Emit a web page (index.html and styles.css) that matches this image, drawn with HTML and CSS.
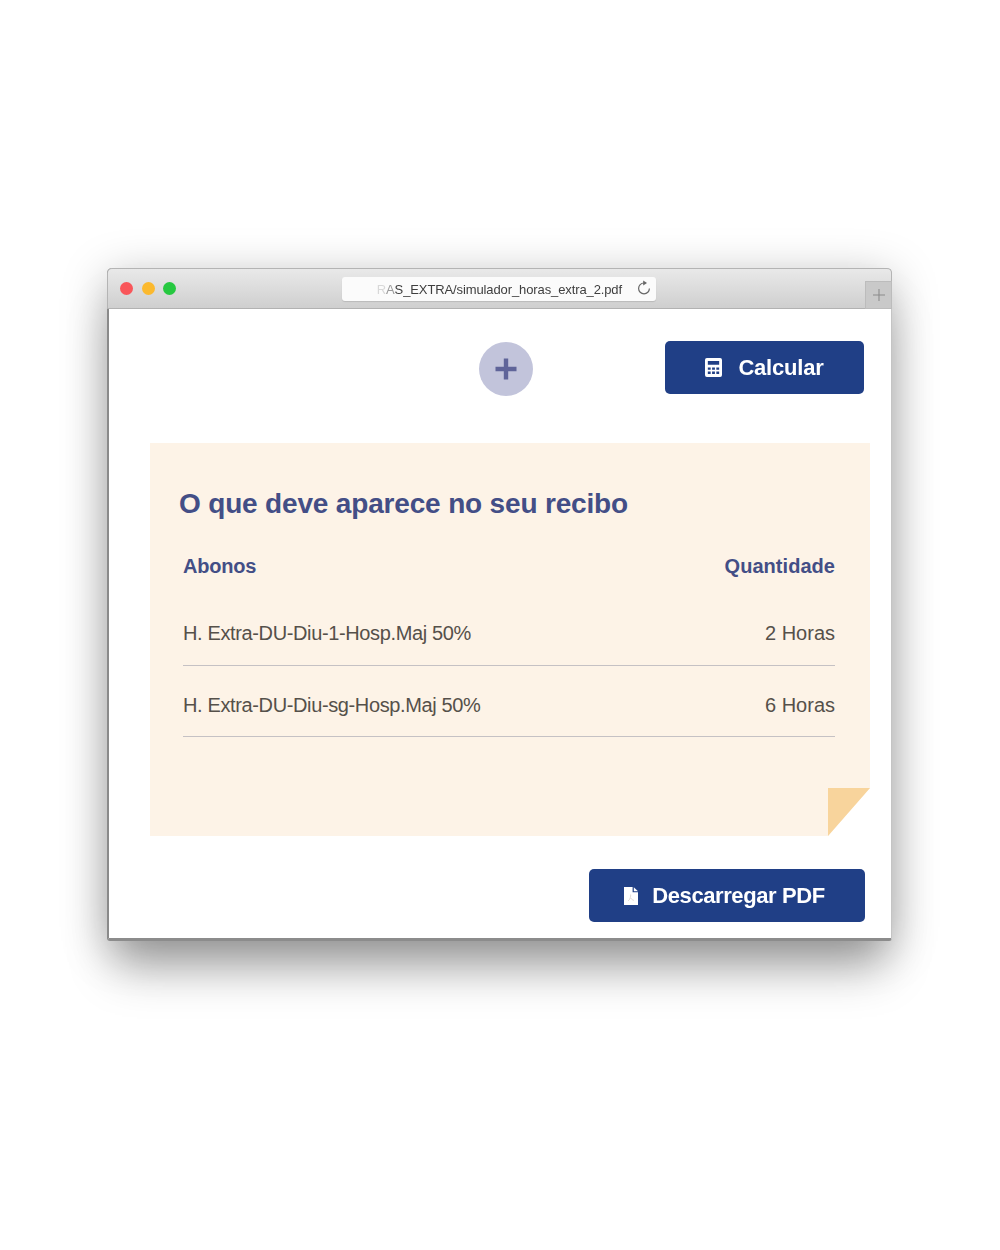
FILE: index.html
```html
<!DOCTYPE html>
<html lang="pt">
<head>
<meta charset="utf-8">
<title>Simulador de horas extra</title>
<link rel="stylesheet" href="styles.css">
</head>
<body>
<main class="window">
  <header class="titlebar">
    <div class="lights">
      <span class="light red"></span>
      <span class="light yellow"></span>
      <span class="light green"></span>
    </div>
    <div class="address">
      <span class="url"><span class="fade1">R</span><span class="fade2">A</span>S_EXTRA/simulador_horas_extra_2.pdf</span>
      <svg class="reload" viewBox="0 0 16 16" width="16" height="16" aria-hidden="true">
        <path d="M8 3a5.4 5.4 0 1 0 5.4 5.4" fill="none" stroke="#666" stroke-width="1.2"/>
        <path d="M7.2 0.6 L11 3 L7.2 5.4 Z" fill="#666"/>
      </svg>
    </div>
    <div class="newtab">
      <svg viewBox="0 0 12 12" width="12" height="12" aria-hidden="true">
        <path d="M6 0v12M0 6h12" stroke="#8c8c8c" stroke-width="1.1"/>
      </svg>
    </div>
  </header>
  <section class="content">
    <div class="toolbar">
      <button class="add" type="button" aria-label="Adicionar">
        <svg viewBox="0 0 22 22" width="22" height="22" aria-hidden="true">
          <path d="M11 0.5v21M0.5 11h21" stroke="#5f6499" stroke-width="4.4"/>
        </svg>
      </button>
      <button class="btn btn-calc" type="button">
        <svg viewBox="0 0 18 20" width="17" height="19" aria-hidden="true">
          <path fill="#fff" fill-rule="evenodd" d="M2 0h14a2 2 0 0 1 2 2v16a2 2 0 0 1-2 2H2a2 2 0 0 1-2-2V2a2 2 0 0 1 2-2zM3 3v4h12V3zM3 10v2.4h3V10zM7.5 10v2.4h3V10zM12 10v2.4h3V10zM3 14.3v2.7h3v-2.7zM7.5 14.3v2.7h3v-2.7zM12 14.3v2.7h3v-2.7z"/>
        </svg>
        <span>Calcular</span>
      </button>
    </div>
    <div class="receipt">
      <div class="sheet">
        <h1 class="heading">O que deve aparece no seu recibo</h1>
        <table class="items">
          <thead>
            <tr><th>Abonos</th><th>Quantidade</th></tr>
          </thead>
          <tbody>
            <tr><td>H. Extra-DU-Diu-1-Hosp.Maj 50%</td><td>2 Horas</td></tr>
            <tr><td>H. Extra-DU-Diu-sg-Hosp.Maj 50%</td><td>6 Horas</td></tr>
          </tbody>
        </table>
      </div>
      <div class="fold"></div>
    </div>
    <div class="actions">
      <button class="btn btn-pdf" type="button">
        <svg viewBox="0 0 14 18" width="14" height="18" aria-hidden="true">
          <path fill="#fff" d="M0 0h8.6v5.2H14V18H0z"/>
          <path fill="#fff" d="M9.8 0.2 L14 4.2H9.8z"/>
          <path fill="none" stroke="#c9b9b0" stroke-width=".5" d="M4 14c2-1 3-5 2.6-6.5M6.6 11c1 1.4 2 2 3.4 2.4"/>
        </svg>
        <span>Descarregar PDF</span>
      </button>
    </div>
  </section>
</main>
</body>
</html>
```

FILE: styles.css
```css
* { box-sizing: border-box; }

html, body { margin: 0; background: #fff; }

body {
  width: 1000px;
  height: 1250px;
  padding: 268px 108px 0 107px;
  overflow: hidden;
  font-family: "Liberation Sans", Arial, sans-serif;
}

.window {
  width: 785px;
  height: 673px;
  background: #fff;
  border-radius: 5px 5px 3px 3px;
  border-left: 2px solid #8a8a8a;
  border-right: 1px solid #c4c4c4;
  border-bottom: 3px solid #8c8c8c;
  box-shadow: 0 36px 44px -8px rgba(0, 0, 0, .28), 0 8px 46px rgba(0, 0, 0, .26);
  display: flex;
  flex-direction: column;
}

.titlebar {
  height: 41px;
  margin: 0 -1px 0 -2px;
  flex: none;
  display: flex;
  align-items: flex-start;
  background: linear-gradient(#e9e9e9, #cfcfcf);
  border: 1px solid #b4b4b4;
  border-bottom: 1px solid #b2b2b2;
  border-radius: 5px 5px 0 0;
  position: relative;
  filter: blur(.35px);
}

.lights {
  display: flex;
  gap: 8.5px;
  margin: 13px 0 0 12px;
}

.light {
  width: 13px;
  height: 13px;
  border-radius: 50%;
}

.red { background: #f9565a; }
.yellow { background: #fbb92e; }
.green { background: #26c840; }

.address {
  width: 314px;
  height: 24px;
  margin: 8px 0 0 166px;
  background: #fbfbfb;
  border-radius: 3px;
  box-shadow: 0 1px 1px rgba(0, 0, 0, .12);
  display: flex;
  align-items: center;
  justify-content: flex-end;
  padding-right: 4px;
  gap: 14px;
}

.url {
  font-size: 13px;
  color: #3e3e3e;
  letter-spacing: -.11px;
  white-space: nowrap;
}

.fade1 { color: #d8d8d8; }
.fade2 { color: #9a9a9a; }

.reload { flex: none; margin-top: -2px; }

.newtab {
  position: absolute;
  right: -1px;
  top: 12px;
  width: 27px;
  height: 28px;
  background: #c9c9c9;
  border: 1px solid #bcbcbc;
  display: flex;
  align-items: center;
  justify-content: center;
}

.content {
  flex: 1;
  display: flex;
  flex-direction: column;
  padding: 32px 27px 0 41px;
  filter: blur(.35px);
}

.toolbar {
  display: flex;
  align-items: flex-start;
  justify-content: flex-end;
  height: 102px;
}

.add {
  width: 54px;
  height: 54px;
  margin: 1px 132px 0 0;
  border: 0;
  padding: 0;
  border-radius: 50%;
  background: #c2c4db;
  display: flex;
  align-items: center;
  justify-content: center;
}

.btn {
  height: 53px;
  border: 0;
  border-radius: 5px;
  background: #203f86;
  color: #fff;
  font: bold 22px "Liberation Sans", Arial, sans-serif;
  letter-spacing: -.2px;
  display: flex;
  align-items: center;
  justify-content: center;
  padding: 0;
}

.btn-calc {
  width: 199px;
  gap: 16px;
}

.btn-pdf {
  width: 276px;
  gap: 14px;
  padding-right: 5px;
  letter-spacing: -.4px;
}

.receipt {
  position: relative;
  width: 720px;
  height: 393px;
}

.sheet {
  height: 100%;
  background: #fdf3e7;
  padding: 43px 35px 0 29px;
  clip-path: polygon(0 0, 100% 0, 100% 345px, 678px 100%, 0 100%);
}

.heading {
  margin: 0 0 24px;
  font-size: 28px;
  line-height: 36px;
  font-weight: 700;
  color: #434e86;
  letter-spacing: -.17px;
}

.items {
  width: 652px;
  margin-left: 4px;
  border-collapse: collapse;
  font-size: 20px;
}

.items th {
  height: 40px;
  padding: 0;
  text-align: left;
  font-weight: 700;
  color: #434e86;
  letter-spacing: -.2px;
}

.items td {
  height: 71px;
  padding: 9px 0 0;
  color: #55504a;
  letter-spacing: -.37px;
  border-bottom: 1px solid #c5c1c4;
}

.items th:last-child,
.items td:last-child { text-align: right; }

.items th:last-child { letter-spacing: .04px; }

.items td:last-child { letter-spacing: 0; }

.items tbody tr:first-child td { height: 79px; padding-top: 17px; }

.fold {
  position: absolute;
  right: 0;
  bottom: 0;
  width: 42px;
  height: 48px;
  background: #f8d49c;
  clip-path: polygon(0 0, 100% 0, 0 100%);
}

.actions {
  display: flex;
  justify-content: flex-end;
  margin: 33px 0 0;
  width: 715px;
}
```
